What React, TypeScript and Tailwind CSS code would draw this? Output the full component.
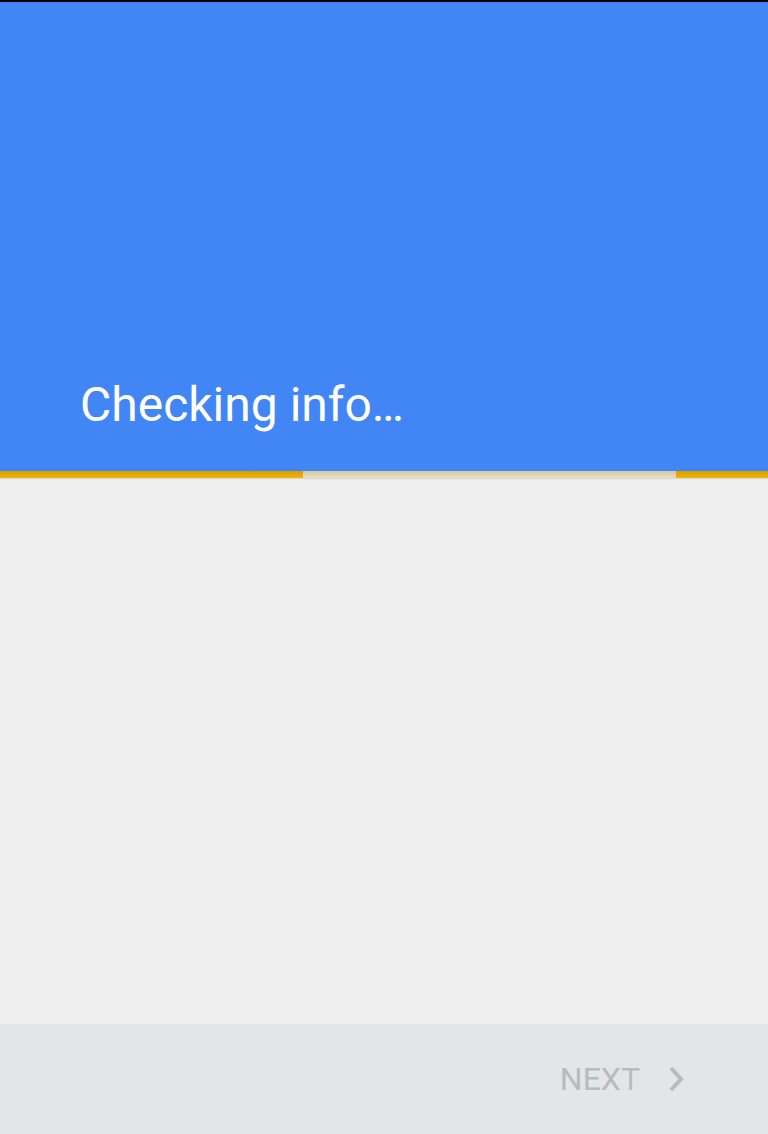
import React from "react";

export default function App() {
  return (
    <div className="w-[768px] h-[1134px] flex flex-col bg-[#eeeeee] overflow-hidden" style={{ fontFamily: "Roboto, 'Noto Sans', sans-serif" }}>
      <div className="h-[2px] bg-black shrink-0" />
      <div className="h-[469px] bg-[#4285f4] flex flex-col justify-end shrink-0">
        <div className="pl-[80px] pb-[38px] text-white text-[48px] leading-[56px]">Checking info…</div>
      </div>
      <div className="h-[7px] flex shrink-0 shadow-[0_1px_1px_rgba(0,0,0,0.08)]">
        <div className="w-[303px] bg-gradient-to-b from-[#d89c00] to-[#f0b400]" />
        <div className="w-[373px] bg-gradient-to-b from-[#d6c9a0] to-[#eadfbf]" />
        <div className="flex-1 bg-gradient-to-b from-[#d89c00] to-[#f0b400]" />
      </div>
      <div className="flex-1" />
      <div className="h-[110px] bg-[#e2e6e9] flex items-center justify-end pr-[82px] shrink-0">
        <span className="text-[32px] text-[#b8bbbc] leading-none">NEXT</span>
        <svg className="ml-[28px]" width="18" height="26" viewBox="0 0 18 26" fill="none">
          <path d="M3 2 L13 13 L3 24" stroke="#b8bbbc" strokeWidth="4" />
        </svg>
      </div>
    </div>
  );
}
